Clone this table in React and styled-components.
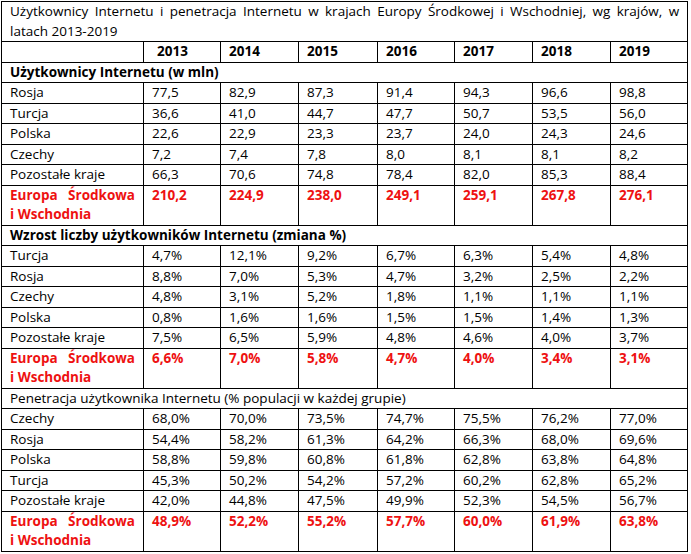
import React from 'react';
import styled, { createGlobalStyle } from 'styled-components';

const GlobalStyle = createGlobalStyle`
    html, body {
        margin:0;
        padding:0;
        background:#ffffff;
    }
`;

const Page = styled.div`
    padding:1px 0 0 1px;
    font-family: "Open Sans", Lato, "Liberation Sans", sans-serif;
    font-size:13.5px;
    color:#000;
`;

const Table = styled.table`
    border-collapse:collapse;
    table-layout:fixed;
    width:686px;
`;

const Cell = styled.td`
    border:1px solid #000;
    padding:0 8px;
    height:19.5px;
    line-height:19.5px;
    vertical-align:top;
    text-align:${(p) => (p.$justify ? 'justify' : 'left')};
    font-weight:${(p) => (p.$bold ? 'bold' : 'normal')};
    color:${(p) => (p.$red ? '#ee1111' : '#000')};
    white-space:${(p) => (p.$wrap ? 'normal' : 'nowrap')};
    overflow:hidden;
`;

const YearCell = styled(Cell)`
    padding-left:${(p) => (p.$indent ? '13px' : '8px')};
`;

const colWidths = [142, 77, 78, 79, 77, 78, 78, 77];
const years = ['2013', '2014', '2015', '2016', '2017', '2018', '2019'];

const sections = [
    {
        title: 'Użytkownicy Internetu (w mln)',
        bold: true,
        rows: [
            ['Rosja', '77,5', '82,9', '87,3', '91,4', '94,3', '96,6', '98,8'],
            ['Turcja', '36,6', '41,0', '44,7', '47,7', '50,7', '53,5', '56,0'],
            ['Polska', '22,6', '22,9', '23,3', '23,7', '24,0', '24,3', '24,6'],
            ['Czechy', '7,2', '7,4', '7,8', '8,0', '8,1', '8,1', '8,2'],
            ['Pozostałe kraje', '66,3', '70,6', '74,8', '78,4', '82,0', '85,3', '88,4'],
        ],
        total: ['210,2', '224,9', '238,0', '249,1', '259,1', '267,8', '276,1'],
    },
    {
        title: 'Wzrost liczby użytkowników Internetu (zmiana %)',
        bold: true,
        rows: [
            ['Turcja', '4,7%', '12,1%', '9,2%', '6,7%', '6,3%', '5,4%', '4,8%'],
            ['Rosja', '8,8%', '7,0%', '5,3%', '4,7%', '3,2%', '2,5%', '2,2%'],
            ['Czechy', '4,8%', '3,1%', '5,2%', '1,8%', '1,1%', '1,1%', '1,1%'],
            ['Polska', '0,8%', '1,6%', '1,6%', '1,5%', '1,5%', '1,4%', '1,3%'],
            ['Pozostałe kraje', '7,5%', '6,5%', '5,9%', '4,8%', '4,6%', '4,0%', '3,7%'],
        ],
        total: ['6,6%', '7,0%', '5,8%', '4,7%', '4,0%', '3,4%', '3,1%'],
    },
    {
        title: 'Penetracja użytkownika Internetu (% populacji w każdej grupie)',
        bold: false,
        rows: [
            ['Czechy', '68,0%', '70,0%', '73,5%', '74,7%', '75,5%', '76,2%', '77,0%'],
            ['Rosja', '54,4%', '58,2%', '61,3%', '64,2%', '66,3%', '68,0%', '69,6%'],
            ['Polska', '58,8%', '59,8%', '60,8%', '61,8%', '62,8%', '63,8%', '64,8%'],
            ['Turcja', '45,3%', '50,2%', '54,2%', '57,2%', '60,2%', '62,8%', '65,2%'],
            ['Pozostałe kraje', '42,0%', '44,8%', '47,5%', '49,9%', '52,3%', '54,5%', '56,7%'],
        ],
        total: ['48,9%', '52,2%', '55,2%', '57,7%', '60,0%', '61,9%', '63,8%'],
    },
];

function Section({ section }) {
    return (
        <>
            <tr>
                <Cell colSpan={8} $bold={section.bold}>{section.title}</Cell>
            </tr>
            {section.rows.map((row) => (
                <tr key={row[0]}>
                    {row.map((v, i) => (
                        <Cell key={i}>{v}</Cell>
                    ))}
                </tr>
            ))}
            <tr>
                <Cell $bold $red $wrap $justify>Europa Środkowa i{'\u00a0'}Wschodnia</Cell>
                {section.total.map((v, i) => (
                    <Cell key={i} $bold $red>{v}</Cell>
                ))}
            </tr>
        </>
    );
}

function App() {
    return (
        <Page>
            <GlobalStyle />
            <Table>
                <colgroup>
                    {colWidths.map((w, i) => (
                        <col key={i} style={{ width: w }} />
                    ))}
                </colgroup>
                <tbody>
                    <tr>
                        <Cell colSpan={8} $wrap $justify>
                            Użytkownicy Internetu i penetracja Internetu w krajach Europy Środkowej i Wschodniej, wg krajów, w latach 2013-2019
                        </Cell>
                    </tr>
                    <tr>
                        <Cell />
                        {years.map((y, i) => (
                            <YearCell key={y} $bold $indent={i === 0}>{y}</YearCell>
                        ))}
                    </tr>
                    {sections.map((s) => (
                        <Section key={s.title} section={s} />
                    ))}
                </tbody>
            </Table>
        </Page>
    );
}

export default App
